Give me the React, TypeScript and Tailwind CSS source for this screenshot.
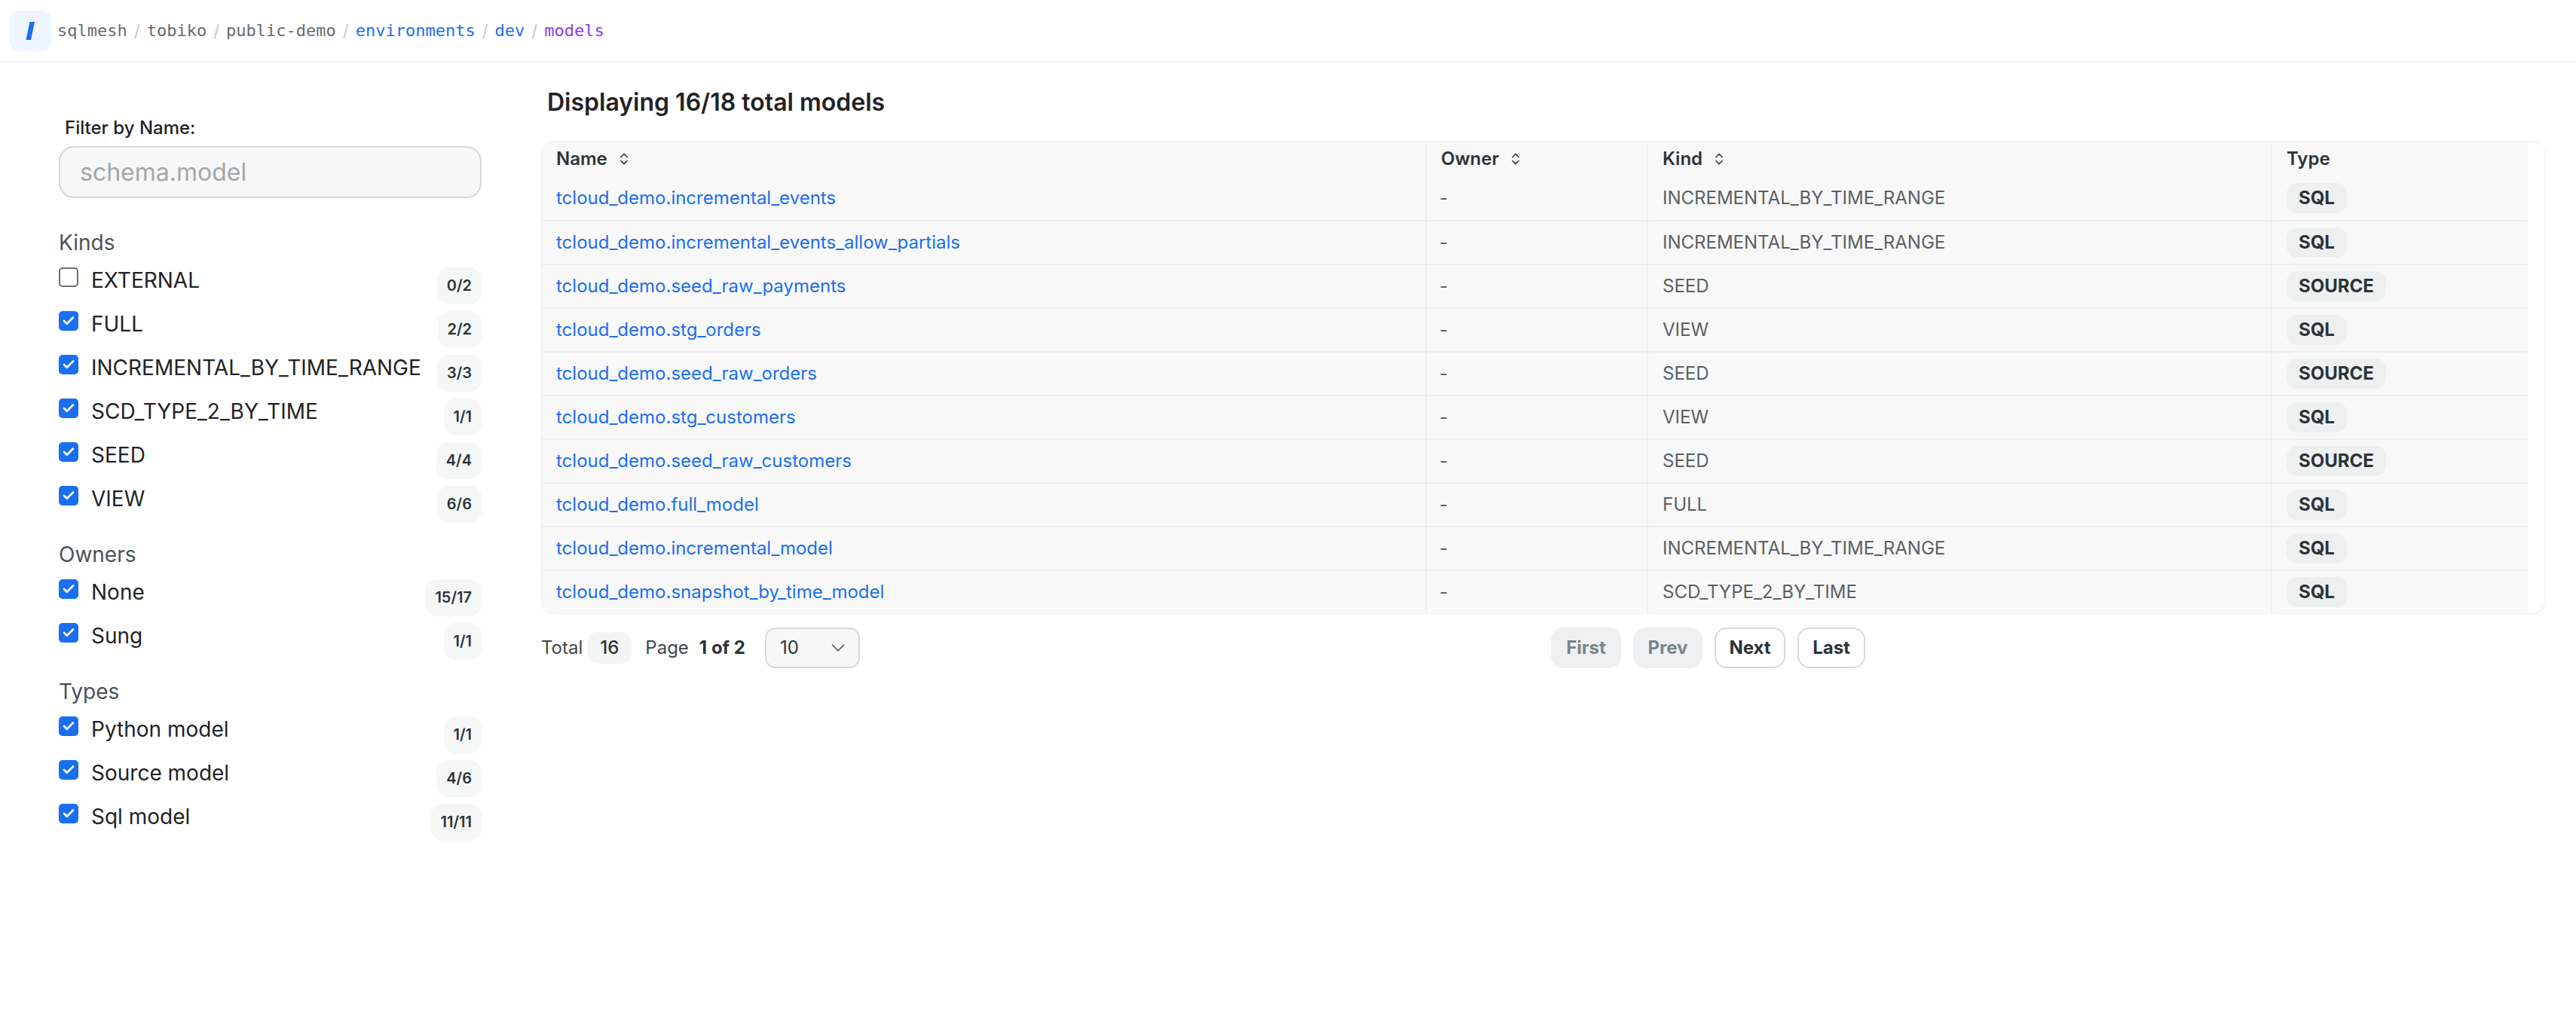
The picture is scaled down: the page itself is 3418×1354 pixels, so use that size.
import { Check, ChevronDown, ChevronsUpDown } from 'lucide-react';

// Models list page: breadcrumb header, filter sidebar and paged table

type Row = { name: string; owner: string; kind: string; type: 'SQL' | 'SOURCE' };

const rows: Row[] = [
  { name: 'tcloud_demo.incremental_events', owner: '-', kind: 'INCREMENTAL_BY_TIME_RANGE', type: 'SQL' },
  { name: 'tcloud_demo.incremental_events_allow_partials', owner: '-', kind: 'INCREMENTAL_BY_TIME_RANGE', type: 'SQL' },
  { name: 'tcloud_demo.seed_raw_payments', owner: '-', kind: 'SEED', type: 'SOURCE' },
  { name: 'tcloud_demo.stg_orders', owner: '-', kind: 'VIEW', type: 'SQL' },
  { name: 'tcloud_demo.seed_raw_orders', owner: '-', kind: 'SEED', type: 'SOURCE' },
  { name: 'tcloud_demo.stg_customers', owner: '-', kind: 'VIEW', type: 'SQL' },
  { name: 'tcloud_demo.seed_raw_customers', owner: '-', kind: 'SEED', type: 'SOURCE' },
  { name: 'tcloud_demo.full_model', owner: '-', kind: 'FULL', type: 'SQL' },
  { name: 'tcloud_demo.incremental_model', owner: '-', kind: 'INCREMENTAL_BY_TIME_RANGE', type: 'SQL' },
  { name: 'tcloud_demo.snapshot_by_time_model', owner: '-', kind: 'SCD_TYPE_2_BY_TIME', type: 'SQL' },
];

const kinds = [
  { label: 'EXTERNAL', count: '0/2', checked: false },
  { label: 'FULL', count: '2/2', checked: true },
  { label: 'INCREMENTAL_BY_TIME_RANGE', count: '3/3', checked: true },
  { label: 'SCD_TYPE_2_BY_TIME', count: '1/1', checked: true },
  { label: 'SEED', count: '4/4', checked: true },
  { label: 'VIEW', count: '6/6', checked: true },
];

const owners = [
  { label: 'None', count: '15/17', checked: true },
  { label: 'Sung', count: '1/1', checked: true },
];

const types = [
  { label: 'Python model', count: '1/1', checked: true },
  { label: 'Source model', count: '4/6', checked: true },
  { label: 'Sql model', count: '11/11', checked: true },
];

function Crumbs() {
  const sep = <span className="mx-[9px] text-[#c5c8ca] font-['Inter']">/</span>;
  return (
    <div className="flex items-center font-['DejaVu_Sans_Mono',monospace] text-[22px] leading-[30px]">
      <span className="text-[#6b6b6b]">sqlmesh</span>
      {sep}
      <span className="text-[#6b6b6b]">tobiko</span>
      {sep}
      <span className="text-[#6b6b6b]">public-demo</span>
      {sep}
      <span className="text-[#1a6ff0]">environments</span>
      {sep}
      <span className="text-[#1a6ff0]">dev</span>
      {sep}
      <span className="text-[#8a3df3]">models</span>
    </div>
  );
}

function FilterRow({ label, count, checked }: { label: string; count: string; checked: boolean }) {
  return (
    <label className="flex items-start h-[49px]">
      {checked ? (
        <span className="w-[26px] h-[26px] rounded-[5px] bg-[#1a6ff0] flex items-center justify-center shrink-0">
          <Check size={18} strokeWidth={3.5} color="#ffffff" />
        </span>
      ) : (
        <span className="w-[26px] h-[26px] rounded-[5px] border-2 border-[#6f6f6f] bg-white shrink-0" />
      )}
      <span className="ml-[17px] text-[28px] leading-[34px] text-[#1f2326]">{label}</span>
      <span className="ml-auto h-[49px] px-[13px] rounded-[16px] bg-[#f5f6f6] text-[20px] font-semibold text-[#2c3338] flex items-start pt-[9px]">
        {count}
      </span>
    </label>
  );
}

function Section({ title, items }: { title: string; items: { label: string; count: string; checked: boolean }[] }) {
  return (
    <div className="mt-[24px]">
      <div className="text-[28px] leading-[36px] text-[#4a5258]">{title}</div>
      <div className="mt-[15px] flex flex-col gap-[9px]">
        {items.map((it) => (
          <FilterRow key={it.label} {...it} />
        ))}
      </div>
    </div>
  );
}

function HeaderCell({ label, sortable, first }: { label: string; sortable?: boolean; first?: boolean }) {
  return (
    <div className={`flex items-center px-[19px] text-[24px] font-semibold text-[#2c3338] ${first ? '' : 'border-l-2 border-[#f0f0f0]'}`}>
      {label}
      {sortable && <ChevronsUpDown size={20} strokeWidth={2} className="ml-[12px] text-[#3a4046]" />}
    </div>
  );
}

export default function App() {
  return (
    <div className="min-h-screen bg-white font-['Inter',sans-serif]">
      <header className="h-[83px] border-b-2 border-[#f3f4f4] flex items-center pl-[13px]">
        <div className="w-[55px] h-[54px] rounded-[13px] bg-[#eef5ff] flex items-center justify-center">
          <svg width="55" height="54" viewBox="0 0 55 54">
            <polygon points="26.5,15 33,15 28,39 21.5,39" fill="#1a6ff0" />
          </svg>
        </div>
        <div className="ml-[8px]">
          <Crumbs />
        </div>
      </header>

      <div className="flex pl-[78px] pr-[41px]">
        <aside className="w-[561px] shrink-0 pt-[71px]">
          <div className="ml-[8px] text-[24px] leading-[32px] font-medium text-[#1f2326]">Filter by Name:</div>
          <input
            type="text"
            placeholder="schema.model"
            className="mt-[8px] w-full h-[69px] rounded-[20px] border-2 border-[#d5d8d8] bg-[#f7f7f7] pl-[26px] text-[32px] text-[#1f2326] placeholder:text-[#a3a7aa] outline-none"
          />
          <div className="mt-[41px]">
            <Section title="Kinds" items={kinds} />
            <Section title="Owners" items={owners} />
            <Section title="Types" items={types} />
          </div>
        </aside>

        <main className="ml-[79px] flex-1 pt-[34px]">
          <h1 className="ml-[8px] text-[32px] leading-[38px] font-semibold text-[#1f2326]">Displaying 16/18 total models</h1>

          <div className="mt-[32px] rounded-[16px] border border-[#eeeeee] overflow-hidden bg-white">
            <div className="w-[2635px] bg-[#f8f8f8]">
              <div className="grid grid-cols-[1172px_294px_828px_341px] h-[46px]">
                <HeaderCell label="Name" sortable first />
                <HeaderCell label="Owner" sortable />
                <HeaderCell label="Kind" sortable />
                <HeaderCell label="Type" />
              </div>
              {rows.map((r, i) => (
                <div
                  key={r.name}
                  className={`grid grid-cols-[1172px_294px_828px_341px] h-[58px] ${i === 0 ? '' : 'border-t-2 border-[#eeeeee]'}`}
                >
                  <div className="flex items-center px-[19px] text-[24px] text-[#1a6ff0]">{r.name}</div>
                  <div className="flex items-center px-[17px] text-[24px] text-[#5a6065] border-l-2 border-[#f0f0f0]">{r.owner}</div>
                  <div className="flex items-center px-[19px] text-[24px] text-[#5a6065] border-l-2 border-[#f0f0f0]">{r.kind}</div>
                  <div className="flex items-center px-[19px] border-l-2 border-[#f0f0f0]">
                    <span className="h-[40px] px-[16px] rounded-[14px] bg-[#eef0f0] text-[24px] font-bold text-[#2c3338] flex items-center">
                      {r.type}
                    </span>
                  </div>
                </div>
              ))}
            </div>
          </div>

          <div className="mt-[18px] flex items-center">
            <div className="w-[1340px] flex items-center text-[24px] text-[#3f464b]">
              <span>Total</span>
              <span className="ml-[6px] h-[42px] px-[17px] rounded-[14px] bg-[#f4f5f5] font-medium text-[#2c3338] flex items-center">16</span>
              <span className="ml-[18px]">Page</span>
              <span className="ml-[14px] font-bold text-[#2c3338]">1 of 2</span>
              <div className="ml-[26px] w-[126px] h-[54px] rounded-[14px] border-2 border-[#d5d9d9] bg-[#f7f7f7] pl-[18px] pr-[12px] flex items-center justify-between text-[#2c3338]">
                <span>10</span>
                <ChevronDown size={30} strokeWidth={1.4} className="text-[#4a5258]" />
              </div>
            </div>
            <div className="flex items-center gap-[16px] text-[24px] font-bold">
              <button className="h-[54px] w-[93px] rounded-[16px] bg-[#eef0f1] text-[#7b8489]">First</button>
              <button className="h-[54px] w-[92px] rounded-[16px] bg-[#eef0f1] text-[#7b8489]">Prev</button>
              <button className="h-[54px] w-[94px] rounded-[16px] border-2 border-[#d6dada] bg-white text-[#2c3338]">Next</button>
              <button className="h-[54px] w-[90px] rounded-[16px] border-2 border-[#d6dada] bg-white text-[#2c3338]">Last</button>
            </div>
          </div>
        </main>
      </div>
    </div>
  );
}
